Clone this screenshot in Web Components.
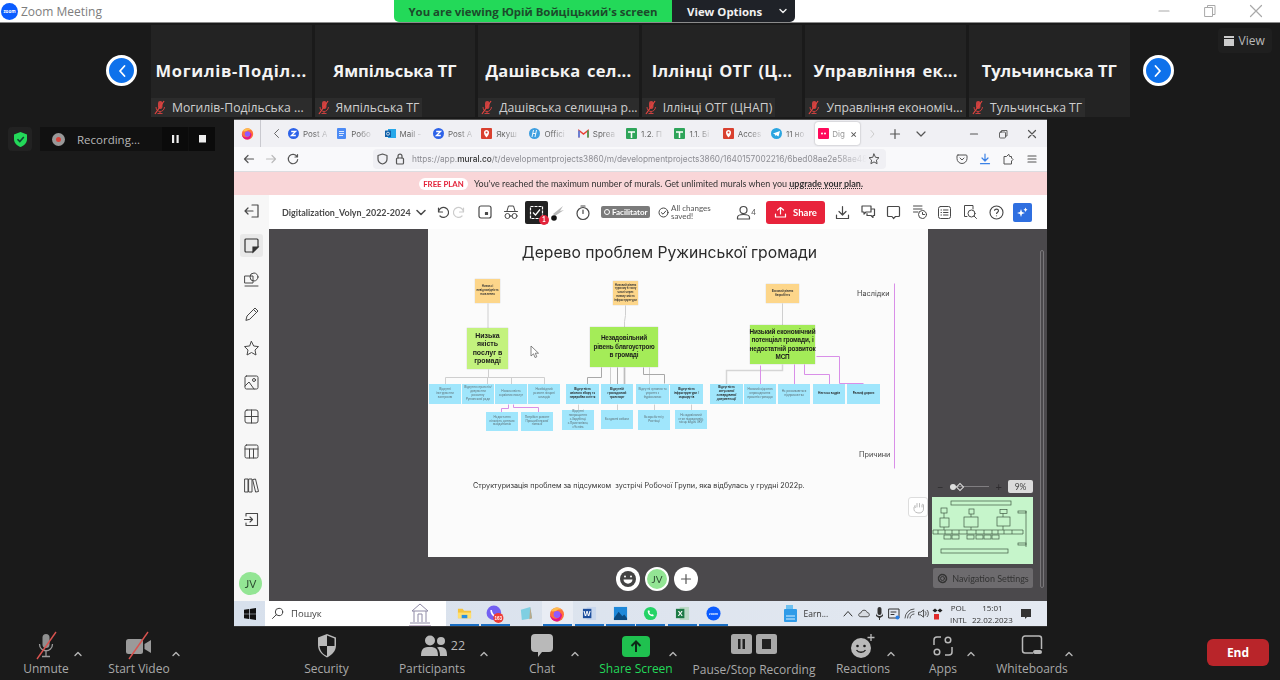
<!DOCTYPE html>
<html lang="uk">
<head>
<meta charset="utf-8">
<title>Zoom Meeting</title>
<style>
  html, body { margin: 0; height: 680px; overflow: hidden; background: #1a1a1a; }
  body { font-family: "Open Sans", "Noto Sans", sans-serif; display: flex; flex-direction: column; }
  #stage { display: grid; grid-template-columns: 234px 813px 1fr; height: 508px; }
</style>
</head>
<body>
<zoom-titlebar></zoom-titlebar>

<film-strip>
  <film-tile name="Могилів-Поділ..." label="Могилів-Подільська ..." full style="--ls:.7px"></film-tile>
  <film-tile name="Ямпільська ТГ" label="Ямпільська ТГ" style="--ls:0;--ws:0"></film-tile>
  <film-tile name="Дашівська сел..." label="Дашівська селищна р..." full></film-tile>
  <film-tile name="Іллінці ОТГ (Ц..." label="Іллінці ОТГ (ЦНАП)"></film-tile>
  <film-tile name="Управління ек..." label="Управління економіч..." full></film-tile>
  <film-tile name="Тульчинська ТГ" label="Тульчинська ТГ" style="--ls:0;--ws:0"></film-tile>
</film-strip>

<div id="stage">
  <recording-bar></recording-bar>
  <shared-screen>
    <browser-tabs></browser-tabs>
    <browser-url></browser-url>
    <plan-banner></plan-banner>
    <mural-app>
      <mural-canvas>
        <diagram-node x="47" y="50" w="25" h="24" kind="sticky">Низька і невідповідність населення</diagram-node>
        <diagram-node x="185" y="52" w="25" h="24" kind="sticky">Низький рівень туризму в тому числі через низьку якість інфраструктури</diagram-node>
        <diagram-node x="338" y="55" w="33" h="19" kind="sticky">Високий рівень безробіття</diagram-node>

        <diagram-node x="39" y="99" w="41" h="41" kind="green pale">Низька<br>якість<br>послуг в<br>громаді</diagram-node>
        <diagram-node x="162" y="98" w="68" h="40" kind="green">Незадовільний<br>рівень благоустрою<br>в громаді</diagram-node>
        <diagram-node x="322" y="96" w="65" h="39" kind="green">Низький економічний<br>потенціал громади, і<br>недостатній розвиток<br>МСП</diagram-node>

        <diagram-node x="1" y="155" w="32" h="20" kind="blue">Відсутні інструменти контролю</diagram-node>
        <diagram-node x="34" y="155" w="32" h="20" kind="blue">Відсутня стратегія/документи розвитку Ружинської ради</diagram-node>
        <diagram-node x="67" y="155" w="32" h="20" kind="blue">Низька якість сервісних послуг</diagram-node>
        <diagram-node x="100" y="155" w="32" h="20" kind="blue">Необхідний ремонт лікарні закладів</diagram-node>
        <diagram-node x="138" y="155" w="33" h="20" kind="blue bold">Відсутність якісного збору та переробки сміття</diagram-node>
        <diagram-node x="173" y="155" w="32" h="20" kind="blue bold">Відсутній громадський транспорт</diagram-node>
        <diagram-node x="208" y="155" w="33" h="20" kind="blue">Відсутні зупинки та укриття з бурівськими</diagram-node>
        <diagram-node x="242" y="155" w="33" h="20" kind="blue bold">Відсутність інфраструктури /маршрутів</diagram-node>
        <diagram-node x="282" y="155" w="33" h="20" kind="blue bold">Відсутність актуальної затвердженої документації</diagram-node>
        <diagram-node x="316" y="155" w="32" h="20" kind="blue">Низький відсоток впровадження проєктів громади</diagram-node>
        <diagram-node x="350" y="155" w="32" h="20" kind="blue">Не розвиваються підприємства</diagram-node>
        <diagram-node x="385" y="155" w="32" h="20" kind="blue bold">Нестача кадрів</diagram-node>
        <diagram-node x="419" y="155" w="33" h="20" kind="blue bold">Рельєф дороги</diagram-node>

        <diagram-node x="58" y="183" w="32" h="19" kind="blue">Недостатня кількість дитячих майданчиків</diagram-node>
        <diagram-node x="93" y="183" w="32" h="19" kind="blue">Потрібен ремонт Пришиб'янської гімназії</diagram-node>
        <diagram-node x="134" y="181" w="32" h="20" kind="blue">Відсутні покращення: с.Зарубінці, с.Пристанівка, с.Чепінь</diagram-node>
        <diagram-node x="173" y="181" w="32" h="19" kind="blue">Бездомні собаки</diagram-node>
        <diagram-node x="210" y="181" w="32" h="20" kind="blue">Безхребетні у Ростівці</diagram-node>
        <diagram-node x="247" y="181" w="32" h="19" kind="blue">Незадовільний стан підрядників, місць видач ЗКУ</diagram-node>
      </mural-canvas>
    </mural-app>
    <win-taskbar></win-taskbar>
  </shared-screen>
</div>

<zoom-toolbar></zoom-toolbar>

<script>
// small svg helper, everything below is drawn by hand
const svg = (w, h, body, sw = 1.2) =>
  `<svg width="${w}" height="${h}" viewBox="0 0 ${w} ${h}" fill="none" stroke="currentColor" stroke-width="${sw}" stroke-linecap="round" stroke-linejoin="round">${body}</svg>`;

const MUTE_SMALL = `<svg width="12" height="15" viewBox="0 0 12 15" fill="none" style="flex:none">
  <rect x="4" y="1" width="4.500" height="8" rx="2.200" fill="#c9403f"/>
  <path d="M2 7c0 6 8 6 8.500 0M6 11v2.500M3.500 13.500h5" stroke="#c9403f"/>
  <path d="M1 14 10 1" stroke="#e0443f" stroke-width="1.300"/></svg>`;

const FIREFOX = (s) => `<svg width="${s}" height="${s}" viewBox="0 0 16 16">
  <circle cx="8" cy="8.500" r="7" fill="#ff7139"/>
  <path d="M8 15.500a7 7 0 0 1-7-7c1 3 4 5 7 4s4-4 2-6c2 0 3 2 3 3-1 4-3 6-5 6z" fill="#e31587"/>
  <circle cx="8" cy="8.500" r="3.400" fill="#9059ff"/>
  <path d="M2 5c2-4 8-5 11-1-3-1-5 0-6 1-2 0-3 1-5 0z" fill="#ffbd4f"/></svg>`;

class ShadowBase extends HTMLElement {
  constructor() {
    super();
    this.attachShadow({ mode: "open" });
  }
  connectedCallback() {
    this.shadowRoot.innerHTML = `<style>${this.css()}</style>${this.html()}`;
  }
  css() { return ":host{display:block}"; }
  html() { return "<slot></slot>"; }
}

/* ---------- zoom chrome ---------- */
class ZoomTitlebar extends ShadowBase {
  css() {
    return `
      :host { display: grid; grid-template-columns: 394px 401px 1fr; height: 22px; background: #fff; border-bottom: 1px solid #8b8b8b; font-family: "Open Sans", sans-serif; }
      .app { display: flex; align-items: center; gap: 3px; padding-left: 1px; font-size: 12px; color: #7d7d7d; }
      .logo { width: 17px; height: 17px; border-radius: 50%; background: #0b5cff; display: flex; align-items: center; justify-content: center; }
      .logo span { color: #fff; font-size: 4.500px; font-weight: 700; }
      .banner { display: flex; height: 22px; font-weight: 700; }
      .green { width: 278px; background: #23d959; border-radius: 0 0 0 5px; display: flex; align-items: center; justify-content: center; font-size: 11.400px; color: #1c4a2b; }
      .opts { flex: 1; background: #1f2228; color: #f1f1f1; border-radius: 0 0 5px 0; display: flex; align-items: center; padding-left: 15px; gap: 17px; font-size: 11.400px; }
      .win { display: flex; justify-content: flex-end; align-items: center; color: #a9a9a9; gap: 32px; padding-right: 17px; }
    `;
  }
  html() {
    return `
      <div class="app"><div class="logo"><span>zoom</span></div>Zoom Meeting</div>
      <div class="banner">
        <div class="green">You are viewing Юрій Войціцький's screen</div>
        <div class="opts">View Options ${svg(8, 6, '<path d="M1 1.500 4 4.500 7 1.500"/>', 1.4)}</div>
      </div>
      <div class="win">
        ${svg(14, 14, '<path d="M2 7H12"/>')}
        ${svg(14, 14, '<rect x="2" y="3.500" width="7.500" height="9"/><path d="M4.500 3.500V1.500H12V10.500H9.500"/>', 1)}
        ${svg(14, 14, '<path d="M1.500 1.500 12.500 12.500M12.500 1.500 1.500 12.500"/>')}
      </div>`;
  }
}

class FilmStrip extends ShadowBase {
  css() {
    return `
      :host { display: flex; align-items: center; height: 96px; padding: 0 0 1px 106px; box-sizing: border-box; font-family: "Open Sans", sans-serif; }
      .tiles { display: flex; gap: 3px; margin: 0 13px 0 14px; }
      .arrow { width: 31px; height: 31px; flex: none; border-radius: 50%; background: #0e71eb; border: 3px solid #fff; box-sizing: border-box; color: #fff; display: flex; align-items: center; justify-content: center; }
      .view { align-self: flex-start; margin: 5px 0 0 44px; height: 25px; padding: 0 7px 0 6px; display: flex; align-items: center; gap: 5px; background: #1f1f1f; border-radius: 4px; color: #b9b9b9; font-size: 12px; }
      .bars { width: 10px; height: 10px; background: linear-gradient(#ccc 0 2px, #1f1f1f 2px 3px, #ccc 3px); }
    `;
  }
  html() {
    return `
      <div class="arrow">${svg(10, 14, '<path d="M7.500 2 3 7 7.500 12"/>', 1.8)}</div>
      <div class="tiles"><slot></slot></div>
      <div class="arrow">${svg(10, 14, '<path d="M2.500 2 7 7 2.500 12"/>', 1.8)}</div>
      <div class="view"><span class="bars"></span>View</div>`;
  }
}

class FilmTile extends ShadowBase {
  css() {
    return `
      :host { display: flex; flex-direction: column; width: 160.600px; height: 92px; background: #232323; }
      .name { flex: 1; padding-top: 19px; box-sizing: border-box; display: flex; align-items: center; justify-content: center; color: #f4f4f4; font-size: 16.500px; font-weight: 700; white-space: nowrap; word-spacing: var(--ws, 2px); letter-spacing: var(--ls, .25px); }
      .label { align-self: flex-start; height: 19px; display: flex; align-items: center; gap: 6px; padding: 0 3px 0 3px; background: #2c2c2c; color: #cfcfcf; font-size: 12.200px; white-space: nowrap; box-sizing: border-box; }
      :host([full]) .label { width: 100%; }
    `;
  }
  html() {
    return `
      <div class="name">${this.getAttribute("name")}</div>
      <div class="label">${MUTE_SMALL}<span>${this.getAttribute("label")}</span></div>`;
  }
}

class RecordingBar extends ShadowBase {
  css() {
    return `
      :host { display: flex; align-items: flex-start; gap: 8px; padding: 8px 0 0 8px; font-family: "Open Sans", sans-serif; }
      .shield { width: 24px; height: 24px; background: #222; border-radius: 4px; display: flex; align-items: center; justify-content: center; }
      .bar { display: flex; height: 24px; width: 175px; background: #111; align-items: center; color: #b7b7b7; font-size: 11.500px; }
      .dot { width: 13px; height: 13px; margin: 0 12px 0 12px; border-radius: 50%; background: #999; display: flex; align-items: center; justify-content: center; }
      .dot i { width: 5px; height: 5px; border-radius: 50%; background: #d8433b; }
      .txt { flex: 1; }
      .btn { width: 26px; height: 24px; display: flex; align-items: center; justify-content: center; background: #0b0b0b; margin-left: 1px; color: #eee; }
    `;
  }
  html() {
    return `
      <div class="shield"><svg width="15" height="17" viewBox="0 0 15 17"><path d="M7.500 1 14 3.500V8c0 4-3 6.800-6.500 8C4 14.800 1 12 1 8V3.500z" fill="#23d959"/><path d="M4.500 8.200 6.800 10.500 10.800 6" fill="none" stroke="#143" stroke-width="1.600"/></svg></div>
      <div class="bar">
        <span class="dot"><i></i></span><span class="txt">Recording...</span>
        <span class="btn">${svg(9, 10, '<rect x="1" y="1" width="2.200" height="8" fill="currentColor" stroke="none"/><rect x="5.500" y="1" width="2.200" height="8" fill="currentColor" stroke="none"/>')}</span>
        <span class="btn">${svg(9, 10, '<rect x="1" y="1" width="7" height="7.500" fill="currentColor" stroke="none"/>')}</span>
      </div>`;
  }
}

/* ---------- bottom toolbar ---------- */
const TOOLS = [
  { label: "Unmute", ml: 19, w: 54, caret: 1, icon: `<svg width="26" height="30" viewBox="0 0 26 30" fill="none"><rect x="9.500" y="3" width="7" height="14" rx="3.500" fill="#8f8f8f"/><path d="M6.500 13c0 9 13 9 13 0M13 20v5M9 25.500h8" stroke="#9a9a9a" stroke-width="1.300"/><path d="M4 28 23 1" stroke="#d9534f" stroke-width="1.400"/></svg>` },
  { label: "Start Video", ml: 24, w: 64, caret: 1, icon: `<svg width="28" height="30" viewBox="0 0 28 30" fill="none"><rect x="1" y="8" width="17" height="15" rx="2.500" fill="#9a9a9a"/><path d="M19.500 13 26 9v13l-6.500-4z" fill="#9a9a9a"/><path d="M4 28 23 1" stroke="#d9534f" stroke-width="1.400"/></svg>` },
  { label: "Security", ml: 114, w: 63, icon: `<svg width="20" height="26" viewBox="0 0 20 26"><path d="M10 1 19 4.500V12c0 6-4 10-9 12.500C5 22 1 18 1 12V4.500z" fill="#b9b9b9"/><path d="M10 2.500V13H2.500C2.500 8 2.500 6 2.500 5.500zM10 13h7.500c-.5 5-3.500 8.500-7.500 10z" fill="#1a1a1a" transform="matrix(-1 0 0 1 20 0)"/></svg>` },
  { label: "Participants", ml: 27, w: 94, caret: 1, count: "22", icon: `<svg width="26" height="24" viewBox="0 0 26 24" fill="#b9b9b9"><circle cx="9" cy="6.500" r="5"/><circle cx="20" cy="7" r="4"/><path d="M0 22c0-8 3-9 9-9s8 2 8 9zM18 13c5 0 8 1 8 8v1h-7c0-4-1-7-3-8.500z"/></svg>` },
  { label: "Chat", ml: 25, w: 56, caret: 1, icon: `<svg width="22" height="25" viewBox="0 0 22 25"><path d="M4 1h14a4 4 0 0 1 4 4v10a4 4 0 0 1-4 4h-7l-4 5v-5H4a4 4 0 0 1-4-4V5a4 4 0 0 1 4-4z" fill="#b9b9b9"/></svg>` },
  { label: "Share Screen", ml: 24, w: 64, caret: 1, green: 1, icon: `<svg width="28" height="21" viewBox="0 0 28 21" style="margin-top:2px"><rect width="28" height="21" rx="4" fill="#1fc14f"/><path d="M14 16V6M9.500 10 14 5.500 18.500 10" fill="none" stroke="#0c2b17" stroke-width="2"/></svg>` },
  { label: "Pause/Stop Recording", ml: 14, w: 124, low: 1, icon: `<svg width="46" height="22" viewBox="0 0 46 22" style="margin-top:-3px"><rect x="0" y="1" width="21" height="20" rx="2.500" fill="#a9a9a9"/><rect x="7" y="6" width="2.500" height="10" fill="#222"/><rect x="11.500" y="6" width="2.500" height="10" fill="#222"/><rect x="25" y="1" width="21" height="20" rx="2.500" fill="#a9a9a9"/><rect x="31" y="6" width="9" height="10" fill="#222"/></svg>` },
  { label: "Reactions", ml: 24, w: 46, caret: 1, icon: `<svg width="26" height="26" viewBox="0 0 26 26"><circle cx="11" cy="15" r="10" fill="#b9b9b9"/><circle cx="7.500" cy="13" r="1.300" fill="#1a1a1a"/><circle cx="14.500" cy="13" r="1.300" fill="#1a1a1a"/><path d="M6.500 17c2 3 7 3 9 0" fill="none" stroke="#1a1a1a" stroke-width="1.300"/><path d="M21 1v7M17.500 4.500h7" stroke="#b9b9b9" stroke-width="1.300"/></svg>` },
  { label: "Apps", ml: 24, w: 46, caret: 1, icon: `<svg width="22" height="24" viewBox="0 0 22 24" fill="none" stroke="#b9b9b9" stroke-width="1.500"><path d="M9 3H5a3 3 0 0 0-3 3v5M20 13v5a3 3 0 0 1-3 3h-4"/><circle cx="16" cy="6" r="2.800"/><circle cx="5" cy="18" r="2.800"/></svg>` },
  { label: "Whiteboards", ml: 24, w: 64, caret: 1, icon: `<svg width="22" height="24" viewBox="0 0 22 24" fill="none" stroke="#b9b9b9" stroke-width="1.500"><path d="M12 19H4a2.500 2.500 0 0 1-2.500-2.500v-12A2.500 2.500 0 0 1 4 2h14a2.500 2.500 0 0 1 2.500 2.500V15"/><rect x="12" y="16" width="9" height="4" rx="2" fill="#b9b9b9" stroke="none"/></svg>` },
];

class ZoomToolbar extends ShadowBase {
  css() {
    return `
      :host { display: flex; height: 53px; background: #1a1a1a; font-family: "Open Sans", sans-serif; color: #a9a9a9; }
      .tool { display: flex; flex: none; }
      .main { display: flex; flex-direction: column; align-items: center; box-sizing: border-box; padding-top: 3px; }
      .icon { height: 31px; display: flex; align-items: center; gap: 4px; color: #b9b9b9; font-size: 12.500px; }
      .icon.shift { padding-left: 22px; }
      .label { font-size: 12px; line-height: 16px; white-space: nowrap; }
      .low .label { margin-top: 1px; }
      .green .label { color: #23d959; }
      .caret { width: 10px; padding-top: 13px; color: #b5b5b5; }
      .end { margin: 12px 11px 0 auto; width: 62px; height: 27px; border-radius: 6px; background: #b9252a; color: #fff; font-weight: 700; font-size: 12px; display: flex; align-items: center; justify-content: center; }
    `;
  }
  html() {
    const caret = `<div class="caret">${svg(10, 6, '<path d="M2 4.500 5 1.500 8 4.500"/>', 1.4)}</div>`;
    return TOOLS.map((t) => `
      <div class="tool" style="margin-left:${t.ml}px">
        <div class="main ${t.green ? "green" : ""} ${t.low ? "low" : ""}" style="width:${t.w}px">
          <div class="icon ${t.count ? "shift" : ""}">${t.icon}${t.count ? `<span>${t.count}</span>` : ""}</div>
          <div class="label">${t.label}</div>
        </div>
        ${t.caret ? caret : ""}
      </div>`).join("") + `<div class="end">End</div>`;
  }
}

/* ---------- shared firefox window ---------- */
class SharedScreen extends ShadowBase {
  css() {
    return `:host { display: flex; flex-direction: column; height: 508px; background: #fff; filter: blur(.35px); font-family: "Lato", "Inter", sans-serif; overflow: hidden; }`;
  }
}

const TAB_ICONS = {
  zoom: `<svg width="11" height="11" viewBox="0 0 11 11"><circle cx="5.500" cy="5.500" r="5.500" fill="#2d62e8"/><path d="M3.200 3.500H7.600L3.400 7.500H7.800" fill="none" stroke="#fff" stroke-width="1.300"/></svg>`,
  docs: `<svg width="11" height="11" viewBox="0 0 11 11"><rect x="1" width="9" height="11" rx="1" fill="#4d8bf5"/><path d="M3 3.500H8M3 5.500H8M3 7.500H7" stroke="#fff" stroke-width=".8"/></svg>`,
  mail: `<svg width="11" height="11" viewBox="0 0 11 11"><rect x="3" y="1" width="8" height="9" fill="#28a8ea"/><rect y="2.500" width="6" height="6.500" rx=".6" fill="#0f5fa8"/><circle cx="3" cy="5.700" r="1.500" fill="none" stroke="#fff" stroke-width=".7"/></svg>`,
  pin: `<svg width="11" height="11" viewBox="0 0 11 11"><rect width="11" height="11" rx="1" fill="#d9402f"/><path d="M5.500 9.500C3.500 7 3 6 3 4.500a2.500 2.500 0 0 1 5 0C8 6 7.500 7 5.500 9.500z" fill="#fff"/><circle cx="5.500" cy="4.500" r="1" fill="#d9402f"/></svg>`,
  hp: `<svg width="11" height="11" viewBox="0 0 11 11"><circle cx="5.500" cy="5.500" r="5.500" fill="#3f9fe0"/><path d="M4.500 2 3 9M7.500 2 6 9M3.800 5.500H6.800" stroke="#fff" stroke-width=".9"/></svg>`,
  gmail: `<svg width="11" height="11" viewBox="0 0 11 11" fill="none"><path d="M1 9.500V2.500L5.500 6 10 2.500V9.500" stroke="#ea4335" stroke-width="1.500"/><path d="M1 2.500V9.500" stroke="#4285f4" stroke-width="1.500"/><path d="M10 2.500V9.500" stroke="#34a853" stroke-width="1.500"/></svg>`,
  sheet: `<svg width="11" height="11" viewBox="0 0 11 11"><rect width="11" height="11" rx="1" fill="#2fa55a"/><path d="M2 4H9M5.500 4V10" stroke="#fff" stroke-width="1.500"/></svg>`,
  tg: `<svg width="11" height="11" viewBox="0 0 11 11"><circle cx="5.500" cy="5.500" r="5.500" fill="#2ba5e0"/><path d="M2 5.500 9 3 7.500 8.500 5 7 4.300 8.300 4 6.500z" fill="#fff"/></svg>`,
  mural: `<svg width="11" height="11" viewBox="0 0 11 11"><rect width="11" height="11" rx="1" fill="#ff0a5b"/><circle cx="4" cy="5.500" r="1" fill="#fff"/><circle cx="7" cy="5.500" r="1" fill="#fff"/></svg>`,
};
const TABS = [["zoom", "Post A"], ["docs", "Робо"], ["mail", "Mail -"], ["zoom", "Post A"], ["pin", "Якуш"], ["hp", "Offici"], ["gmail", "Sprea"], ["sheet", "1.2. П"], ["sheet", "1.1. Бі"], ["pin", "Acces"], ["tg", "11 но"]];

class BrowserTabs extends ShadowBase {
  css() {
    return `
      :host { display: flex; align-items: center; flex: none; height: 28px; background: #f0f0f4; border-top: 1px solid #555; box-sizing: border-box; font-family: "Inter", sans-serif; font-size: 8px; color: #666; }
      .ff { width: 26px; display: flex; justify-content: center; }
      .sep { width: 1px; height: 27px; background: #c9c9cf; margin-right: 5px; }
      .back { width: 21px; color: #666; display: flex; justify-content: center; }
      .tab { width: 48.300px; flex: none; display: flex; align-items: center; gap: 4px; padding-left: 1px; box-sizing: border-box; white-space: nowrap; }
      .tab span { -webkit-mask-image: linear-gradient(90deg, #000 45%, rgba(0,0,0,.25) 95%); mask-image: linear-gradient(90deg, #000 45%, rgba(0,0,0,.25) 95%); }
      .active { width: 45px; height: 23px; margin: 0 0 0 -3px; flex: none; background: #fff; border-radius: 3px; box-shadow: 0 0 2px rgba(0,0,0,.35); display: flex; align-items: center; padding-left: 3px; box-sizing: border-box; gap: 3px; color: #999; }
      .active b { font-weight: 400; font-size: 11px; color: #555; margin-left: 2px; }
      .rest { flex: 1; display: flex; align-items: center; color: #555; }
      .w { display: flex; justify-content: center; flex: none; }
    `;
  }
  html() {
    const cells = [[10, svg(5, 10, '<path d="M1 1.500 4 5 1 8.500"/>', 1), "#ccc"], [14, svg(12, 12, '<path d="M6 1.500V10.500M1.500 6H10.500"/>')], [14, svg(12, 12, '<path d="M2 4 6 8 10 4"/>')], [42, svg(10, 10, '<path d="M1.500 5H8.500"/>')], [19, svg(10, 10, '<rect x="1.500" y="3" width="6" height="6" rx="1"/><path d="M3.500 3V1.500H9V7H7.500"/>', .9)], [19, svg(10, 10, '<path d="M1.500 1.500 8.500 8.500M8.500 1.500 1.500 8.500"/>')]];
    return `
      <div class="ff">${FIREFOX(13)}</div>
      <div class="sep"></div>
      <div class="back">${svg(7, 11, '<path d="M5.500 1.500 1.500 5.500 5.500 9.500"/>', 1)}</div>
      ${TABS.map(([icon, text]) => `<div class="tab">${TAB_ICONS[icon]}<span>${text}</span></div>`).join("")}
      <div class="active">${TAB_ICONS.mural}<span>Dig</span><b>×</b></div>
      <div class="rest">${cells.map(([ml, ic, col]) => `<span class="w" style="margin-left:${ml}px;${col ? `color:${col}` : ""}">${ic}</span>`).join("")}</div>`;
  }
}

class BrowserUrl extends ShadowBase {
  css() {
    return `
      :host { display: flex; align-items: center; flex: none; height: 25px; background: #f9f9fb; color: #555; padding-left: 9px; box-sizing: border-box; border-bottom: 1px solid #dcdce0; font-family: "Inter", sans-serif; }
      .nav { display: flex; align-items: center; gap: 10px; width: 130px; }
      .box { display: flex; align-items: center; width: 513px; height: 20px; background: #f0f0f4; border-radius: 4px; padding-left: 4px; box-sizing: border-box; }
      .url { width: 455px; margin-left: 7px; white-space: nowrap; font-size: 8.300px; color: #8d8d93; -webkit-mask-image: linear-gradient(90deg, #000 93%, transparent); mask-image: linear-gradient(90deg, #000 93%, transparent); }
      .url b { color: #333; font-weight: 500; }
      .shield { margin-right: 7px; display: flex; }
      .star { margin-left: 1px; display: flex; }
      .right { display: flex; gap: 11px; margin-left: 70px; align-items: center; }
    `;
  }
  html() {
    return `
      <div class="nav">
        ${svg(12, 12, '<path d="M10.500 6H1.500M5 2.500 1.500 6 5 9.500"/>')}
        <span style="color:#bbb;display:flex">${svg(12, 12, '<path d="M1.500 6H10.500M7 2.500 10.500 6 7 9.500"/>')}</span>
        ${svg(12, 12, '<path d="M10 3.500A4.700 4.700 0 1 0 10.700 6.500M10.500 1.500V4H8"/>')}
      </div>
      <div class="box">
        <span class="shield">${svg(11, 12, '<path d="M5.500 1 10 2.500V6c0 2.500-2 4.300-4.500 5C3 10.300 1 8.500 1 6V2.500z"/>')}</span>
        ${svg(10, 12, '<rect x="1.500" y="5" width="7" height="6" rx="1"/><path d="M3 5V3.200a2 2 0 0 1 4 0V5"/>')}
        <span class="url">https://app.<b>mural.co</b>/t/developmentprojects3860/m/developmentprojects3860/1640157002216/6bed08ae2e58ae481</span>
        <span class="star">${svg(12, 12, '<path d="M6 1 7.500 4.300 11 4.700 8.400 7.100 9.100 10.700 6 8.900 2.900 10.700 3.600 7.100 1 4.700 4.500 4.300z"/>', 1)}</span>
      </div>
      <div class="right">
        ${svg(12, 12, '<path d="M2 2H10A1 1 0 0 1 11 3V5.500A5 5 0 0 1 1 5.500V3A1 1 0 0 1 2 2ZM4 5 6 7 8 5"/>', 1)}
        <span style="color:#3b82e6;display:flex">${svg(12, 12, '<path d="M6 1V8M3 5 6 8 9 5M1.500 10.700H10.500"/>')}</span>
        ${svg(12, 12, '<path d="M6.500 1.500 4.500 3.500H2V11H9.500V8L11 6.500 9.500 5V3.500H8z"/>', 1)}
        <span style="margin-left:1px;display:flex">${svg(12, 12, '<path d="M2 3H10M2 6H10M2 9H10"/>')}</span>
      </div>`;
  }
}

class PlanBanner extends ShadowBase {
  css() {
    return `
      :host { display: flex; align-items: center; flex: none; height: 23px; background: #f9d6d8; padding-left: 185px; gap: 6px; font-size: 8.970px; color: #333; white-space: nowrap; box-sizing: border-box; }
      .pill { width: 49px; height: 12px; border-radius: 6px; background: #fff; color: #e3233a; font-weight: 700; font-size: 7.800px; display: flex; align-items: center; justify-content: center; }
      b { font-weight: 700; text-decoration: underline dotted; }
    `;
  }
  html() {
    return `<span class="pill">FREE PLAN</span><span>You've reached the maximum number of murals. Get unlimited murals when you <b>upgrade your plan.</b></span>`;
  }
}

/* ---------- mural app ---------- */
const RAIL = [
  svg(17, 16, '<path d="M9 2H15V14H9M10 8H2M5 5 2 8 5 11"/>'),
  `<svg width="17" height="17" viewBox="0 0 17 17" fill="none" stroke="#333" stroke-width="1.200"><path d="M3 2H14A1 1 0 0 1 15 3V10L10 15H3A1 1 0 0 1 2 14V3A1 1 0 0 1 3 2Z"/><path d="M15 10 10 15V10Z" fill="#333"/></svg>`,
  svg(17, 17, '<circle cx="11" cy="6" r="4"/><rect x="2" y="5" width="8" height="7"/><path d="M2 15H15"/>', 1),
  svg(17, 17, '<path d="M3 14 4 10 12 2 15 5 7 13ZM10.500 3.500 13.500 6.500"/>', 1),
  svg(17, 17, '<path d="M8.500 1.500 10.700 6 15.500 6.600 12 10 13 15 8.500 12.500 4 15 5 10 1.500 6.600 6.300 6Z"/>', 1),
  svg(17, 17, '<rect x="2" y="2" width="13" height="13" rx="1.500"/><circle cx="11" cy="6" r="1.500"/><path d="M2 12 6 8 11 15"/>', 1),
  svg(17, 17, '<rect x="2" y="2" width="13" height="13" rx="2"/><path d="M8.500 2V15M2 8.500H15"/>', 1),
  svg(17, 17, '<rect x="2" y="2" width="13" height="13" rx="1.500"/><path d="M2 6H15M6.500 6V15M10.500 6V15"/>', 1),
  svg(17, 17, '<rect x="2" y="2" width="3" height="13"/><rect x="6" y="2" width="3" height="13"/><path d="M10 2.500 12.500 2 15.500 14.500 13 15Z"/>', 1),
  svg(17, 17, '<path d="M3 5V2.500H14.500V14.500H3V12M1.500 8.500H9.500M7 6 9.500 8.500 7 11"/>', 1.100),
];

// [center x on the screen, width, content] - the row is built with margins from these
const TOPBAR = [
  [421, 12, svg(10, 7, '<path d="M1 1.500 5 5.500 9 1.500"/>', 1.5)],
  [442, 14, svg(14, 14, '<path d="M3.500 3V7H7.500M3.500 7A5 5 0 1 1 5 11"/>')],
  [460, 14, `<span style="color:#ccc;display:flex">${svg(14, 14, '<path d="M10.500 3V7H6.500M10.500 7A5 5 0 1 0 9 11"/>')}</span>`],
  [485, 16, svg(14, 14, '<rect x="1" y="1" width="12" height="12" rx="2"/><rect x="7.500" y="7.500" width="2" height="2" fill="currentColor"/>')],
  [511, 16, svg(16, 16, '<path d="M4 7 5.500 2H10.500L12 7M1.500 7.500H14.500"/><circle cx="4.500" cy="12" r="2.500"/><circle cx="11.500" cy="12" r="2.500"/><path d="M7 12H9"/>', 1)],
  [536.500, 23, `<div class="sel"><svg width="15" height="15" viewBox="0 0 15 15" fill="none" stroke="#fff" stroke-width="1.200"><path d="M1.500 1.500H13.500V13.500H1.500Z" stroke-dasharray="3 1"/><path d="M4 7.500 6.500 10 11 4.500"/></svg><span class="num">1</span></div>`],
  [558, 16, `<svg width="16" height="17" viewBox="0 0 16 17"><path d="M3 10 13 2 10 7 14 6 5 12Z" fill="#b9b9b9"/><circle cx="4" cy="14" r="2.800" fill="#111"/></svg>`],
  [583, 16, svg(16, 17, '<circle cx="8" cy="9.500" r="6"/><path d="M6 2H10M8 6V9.500"/>')],
  [625.500, 49, `<div class="fac"><i></i>Facilitator</div>`],
  [663, 11, svg(11, 11, '<circle cx="5.500" cy="5.500" r="4.500"/><path d="M3.300 5.600 5 7.200 7.800 4"/>', 1)],
  [691, 40, `<div class="saved">All changes<br>saved!</div>`],
  [743, 15, svg(15, 15, '<circle cx="7.500" cy="5" r="3.500"/><path d="M1.500 14V12.500C1.500 10 4 9.500 7.500 9.500S13.500 10 13.500 12.500V14Z"/>')],
  [753.500, 6, `<span class="cnt">4</span>`],
  [795.500, 59, `<div class="share">${svg(13, 13, '<path d="M6.500 8V1.500M3.500 4 6.500 1.500 9.500 4M1.500 8V11H11.500V8" />')}<span>Share</span></div>`],
  [842, 15, svg(15, 15, '<path d="M7.500 1.500V9.500M4 6.500 7.500 10 11 6.500M1.500 10V13.500H13.500V10"/>')],
  [868, 16, svg(16, 16, '<path d="M2 2H11V8H6L4 10V8H2ZM12 5H14.500V11.500H13V13.500L11 11.500H7V9.500"/>')],
  [893, 15, svg(15, 15, '<path d="M2.500 1.500H12.500A1 1 0 0 1 13.500 2.500V10.500A1 1 0 0 1 12.500 11.500H9.500L7.500 13.500 6 11.500H2.500A1 1 0 0 1 1.500 10.500V2.500A1 1 0 0 1 2.500 1.500Z"/>')],
  [920, 16, svg(16, 16, '<path d="M1.500 2H10M1.500 5H10M1.500 8H6"/><circle cx="10.500" cy="10.500" r="4"/><path d="M10.500 8.500V10.500H12.500"/>', 1)],
  [944, 15, svg(15, 15, '<rect x="1.500" y="1.500" width="12" height="12" rx="2"/><path d="M6.500 5H11M6.500 7.500H11M6.500 10H11M4 5H4.500M4 7.500H4.500M4 10H4.500"/>', 1)],
  [970, 16, svg(16, 16, '<path d="M6 1.500H2.500V12.500H5M6 1.500H11V5"/><circle cx="9.500" cy="9.500" r="3.500"/><path d="M12 12 14.500 14.500"/>', 1)],
  [996, 15, `<svg width="15" height="15" viewBox="0 0 15 15" fill="none" stroke="#444" stroke-width="1.100"><circle cx="7.500" cy="7.500" r="6.500"/><path d="M5.500 5.800C5.500 3.500 9.500 3.500 9.500 5.800 9.500 7.300 7.500 7.200 7.500 9M7.500 10.500V11.200"/></svg>`],
  [1022.500, 19, `<div class="ai"><svg width="11" height="11" viewBox="0 0 11 11" fill="#fff"><path d="M4 2 5 5 8 6 5 7 4 10 3 7 0 6 3 5ZM8.500 .5 9.200 2 10.500 2.700 9.200 3.400 8.500 5 7.800 3.400 6.500 2.700 7.800 2Z"/></svg></div>`],
];

class MuralApp extends ShadowBase {
  css() {
    return `
      :host { display: grid; grid-template-columns: 35px 1fr; grid-template-rows: 34px 1fr; height: 406px; flex: none; background: #fff; color: #484848; }
      .rail { grid-row: 1 / 3; background: #f7f7f7; display: flex; flex-direction: column; }
      .rail .it { height: 34.300px; display: flex; align-items: center; justify-content: center; flex: none; }
      .rail .it:first-child { margin-top: -1px; }
      .rail .it > span { display: flex; align-items: center; justify-content: center; }
      .rail .it.on > span { background: #e9e9e9; border-radius: 3px; width: 23px; height: 23px; }
      .avatar { margin: auto 0 6px 5px; width: 23px; height: 23px; border-radius: 50%; background: #93e594; color: #2c4a30; font-size: 10.500px; display: flex; align-items: center; justify-content: center; }
      .top { display: flex; align-items: center; white-space: nowrap; }
      .title { margin-left: 13px; width: 129px; font-size: 8.950px; font-weight: 700; color: #4a4a4a; }
      .c { display: flex; justify-content: center; align-items: center; flex: none; }
      .sel { position: relative; width: 23px; height: 23px; background: #222; border-radius: 2px; display: flex; align-items: center; justify-content: center; }
      .num { position: absolute; right: -1px; bottom: -1px; width: 10px; height: 10px; border-radius: 50%; background: #e3233a; color: #fff; font-size: 6.500px; font-weight: 700; display: flex; align-items: center; justify-content: center; }
      .fac { width: 49px; height: 12px; background: #7b7b7b; border-radius: 2px; color: #fff; font-size: 8px; font-weight: 700; display: flex; align-items: center; gap: 2px; padding-left: 3px; box-sizing: border-box; }
      .fac i { width: 4px; height: 4px; border: 1px solid #fff; border-radius: 50%; }
      .saved { width: 40px; font-size: 8px; line-height: 8.500px; color: #555; }
      .cnt { font-size: 8px; color: #555; }
      .share { width: 59px; height: 23px; border-radius: 3px; background: #e8233b; color: #fff; font-size: 9.500px; font-weight: 700; display: flex; align-items: center; justify-content: center; gap: 6px; }
      .ai { width: 19px; height: 19px; background: #2f6fe0; border-radius: 2px; display: flex; align-items: center; justify-content: center; }
      .board { position: relative; background: #4b494c; overflow: hidden; }
      .float { position: absolute; left: 347px; top: 338px; display: flex; gap: 5px; }
      .float > div { width: 24px; height: 24px; border-radius: 50%; display: flex; align-items: center; justify-content: center; box-sizing: border-box; }
      .emoji { background: #fff; }
      .jv { background: #93e594; border: 2px solid #fff; font-size: 10px; color: #2c4a30; }
      .plus { background: #fff; color: #555; }
      .side { position: absolute; left: 663px; top: 251px; width: 102px; display: flex; flex-direction: column; gap: 4px; }
      .zoom { display: flex; align-items: center; height: 13px; color: #2e2c2f; font-size: 11px; }
      .track { width: 39px; height: 1px; background: #807e81; margin: 0 6px 0 7px; position: relative; }
      .track i { position: absolute; top: -2.500px; width: 6px; height: 6px; border-radius: 50%; background: #ddd; }
      .track i + i { width: 4px; height: 4px; top: -2.500px; background: none; border: 1px solid #ddd; transform: rotate(45deg); border-radius: 0; }
      .pct { margin-left: auto; margin-right: 1px; width: 25px; height: 13px; background: #dcdcdc; border-radius: 2px; color: #444; font-size: 8.500px; display: flex; align-items: center; justify-content: center; }
      .mini { display: block; width: 101px; height: 67px; }
      .nav { width: 100px; height: 20px; margin-left: 1px; border-radius: 2px; background: #6d6b6e; color: #333; font-size: 9px; display: flex; align-items: center; justify-content: center; gap: 4px; }
      .hand { position: absolute; left: 639px; top: 268px; width: 20px; height: 20px; background: #fff; border: 1px solid #ddd; border-radius: 3px; box-sizing: border-box; color: #bbb; display: flex; align-items: center; justify-content: center; }
      .scroll { position: absolute; left: 771px; top: 21px; bottom: 13px; width: 4px; border: 1px solid #79777a; border-radius: 3px; box-sizing: border-box; }
    `;
  }
  html() {
    let x = 411;
    const top = TOPBAR.map(([center, w, content]) => {
      const left = center - w / 2;
      const cell = `<div class="c" style="margin-left:${left - x}px;width:${w}px">${content}</div>`;
      x = left + w;
      return cell;
    }).join("");
    return `
      <div class="rail">
        ${RAIL.map((ic, i) => `<div class="it ${i === 1 ? "on" : ""}"><span>${ic}</span></div>`).join("")}
        <div class="avatar">JV</div>
      </div>
      <div class="top"><div class="title">Digitalization_Volyn_2022-2024</div>${top}</div>
      <div class="board">
        <slot></slot>
        <div class="hand">${svg(13, 13, '<path d="M3 6V4.500M5 6V2.500M7.500 6V2.500M10 6V4C10 3 11.500 3 11.500 4V8C11.500 10.500 9.500 12 7 12S2 10.500 2 8.500V6.500C2 5.500 3 5.500 3.500 6.500"/>', 1)}</div>
        <div class="side">
          <div class="zoom">
            <span style="margin-left:5px">−</span><span class="track"><i style="left:0"></i><i style="left:7px"></i></span><span>+</span>
            <span class="pct">9%</span>
          </div>
          <svg class="mini" viewBox="0 0 101 67" fill="none" stroke="#3f5a44" stroke-width=".7">
            <rect width="101" height="67" fill="#c6f5cb" stroke="none"/>
            <rect x="19" y="4" width="60" height="4"/><rect x="9" y="52" width="67" height="4"/>
            <rect x="9" y="11" width="6" height="5"/><rect x="37" y="12" width="5" height="5"/><rect x="68" y="12.500" width="7" height="4"/>
            <rect x="8" y="21" width="9" height="9"/><rect x="32" y="20" width="14" height="10"/><rect x="65" y="20" width="13" height="9"/>
            <path d="M12 16V21M39 17V20M71 16.500V20M12 30V33M39 30V33M71 29V33"/>
            <path d="M1 33H91M1 37H91M1 33V37M6 33V37M13 33V37M20 33V37M27 33V37M35 33V37M44 33V37M52 33V37M60 33V37M66 33V37M72 33V37M80 33V37M91 33V37"/>
            <rect x="12" y="38" width="7" height="4"/><rect x="20" y="38" width="7" height="4"/><rect x="35" y="38" width="7" height="4"/><rect x="44" y="38" width="7" height="4"/><rect x="52" y="38" width="7" height="4"/><rect x="60" y="38" width="7" height="4"/>
            <path d="M94 14V50"/><rect x="86" y="14" width="8" height="2"/><rect x="86" y="46" width="8" height="2"/>
          </svg>
          <div class="nav">${svg(11, 11, '<circle cx="5.500" cy="5.500" r="2"/><circle cx="5.500" cy="5.500" r="4" stroke-dasharray="2 1.100" stroke-width="1.500"/>', 1)}Navigation Settings</div>
        </div>
        <div class="scroll"></div>
        <div class="float">
          <div class="emoji">${svg(18, 18, '<circle cx="9" cy="9" r="8" fill="#444" stroke="none"/><path d="M4.500 9.500H13.500C13.500 15 4.500 15 4.500 9.500Z" fill="#fff" stroke="none"/><circle cx="6" cy="6.500" r="1" fill="#fff" stroke="none"/><circle cx="12" cy="6.500" r="1" fill="#fff" stroke="none"/>')}</div>
          <div class="jv">JV</div>
          <div class="plus">${svg(12, 12, '<path d="M6 1.500V10.500M1.500 6H10.500"/>')}</div>
        </div>
      </div>`;
  }
}

class MuralCanvas extends ShadowBase {
  css() {
    return `
      :host { display: block; position: absolute; left: 159px; top: 0; width: 500px; height: 328px; background: #fbfbfb; color: #333; font-family: "Lato", "Inter", sans-serif; filter: blur(.15px); }
      svg.lines { position: absolute; inset: 0; }
      .title { position: absolute; left: 0; width: 483px; top: 13px; text-align: center; font-family: "Inter", sans-serif; font-size: 15.700px; line-height: 22px; color: #2b2b2b; white-space: nowrap; }
      .cap { position: absolute; left: 45px; top: 252px; font-family: "Inter", sans-serif; font-size: 7.250px; line-height: 10px; color: #333; white-space: pre; }
      .side { position: absolute; font-family: "Inter", sans-serif; font-size: 7.300px; line-height: 12px; color: #444; }
      .cursor { position: absolute; left: 102px; top: 116px; }
    `;
  }
  html() {
    return `
      <svg class="lines" width="500" height="328" fill="none"><g transform="translate(.5 .5)">
        <g stroke="#cfcfcf" stroke-width="1">
          <path d="M59.500 74V99M60 140V148M17 155V148H116V155M59 148V155M83 148V155"/>
          <path d="M197 76V86L196 92V98"/>
          <path d="M182 138V155M221 138V155M232 155H250"/>
          <path d="M150 175V181M189 175V181M226 175V181M263 175V181"/>
          <path d="M354 74V96"/>
        </g>
        <g stroke="#a8a8a8" stroke-width="1"><path d="M173 138V148H159V155M189 138V155M215 138V145H236V154"/></g>
        <path d="M196 138V155" stroke="#bdbdbd" stroke-width="1.700"/>
        <path d="M354 135V141H298V155" stroke="#d5d5d5" stroke-width="1.500"/>
        <g stroke="#d98fe8" stroke-width="1">
          <path d="M73 183V179H80V175M85 175V178H110V183"/>
          <path d="M332 155V136M366 155V135M376 135V145H401V155M388 127H411V154H435"/>
          <path d="M466 54V239"/>
        </g>
      </g></svg>
      <slot></slot>
      <div class="title">Дерево проблем Ружинської громади</div>
      <div class="side" style="left:429px;top:59px">Наслідки</div>
      <div class="side" style="left:431px;top:220px">Причини</div>
      <div class="cap">Структуризація проблем за підсумком  зустрічі Робочої Групи, яка відбулась у грудні 2022р.</div>
      <svg class="cursor" width="10" height="14" viewBox="0 0 10 14"><path d="M1 1V11L3.500 8.800 5 12.500 6.800 11.800 5.300 8.200H8.500Z" fill="#fff" stroke="#666" stroke-width=".8"/></svg>`;
  }
}

class DiagramNode extends ShadowBase {
  css() {
    const a = (n) => this.getAttribute(n);
    return `
      :host { position: absolute; left: ${a("x")}px; top: ${a("y")}px; width: ${a("w")}px; height: ${a("h")}px; display: flex; align-items: center; justify-content: center; text-align: center; box-sizing: border-box; padding: 1px 2px; }
      :host(.sticky) { background: #fdd68a; color: #333; font-size: 3px; line-height: 3.800px; font-weight: 700; box-shadow: 0 0 1px rgba(0,0,0,.25); }
      :host(.green) { background: #a4ec58; color: #1c1c1c; font-family: "Liberation Sans", sans-serif; font-size: 6.400px; line-height: 8.400px; letter-spacing: -.15px; font-weight: 700; padding: 0; white-space: nowrap; box-shadow: 0 0 1px rgba(0,0,0,.3); }
      :host(.pale) { background: #c3f27e; font-size: 7px; letter-spacing: 0; }
      :host(.blue) { background: #a0e6fc; color: #5d7077; font-size: 3.100px; line-height: 3.900px; }
      :host(.bold) { color: #222; font-weight: 700; }
    `;
  }
  connectedCallback() {
    this.className = this.getAttribute("kind");
    super.connectedCallback();
  }
}

/* ---------- windows taskbar ---------- */
const TB = (s, body) => `<svg width="${s}" height="${s}" viewBox="0 0 16 16">${body}</svg>`;
const TASK = [
  [464, TB(15, '<path d="M1 3H6L7.500 5H15V13H1Z" fill="#f5c33b"/><rect x="1" y="7" width="14" height="6" fill="#ffdf6e"/><rect x="5" y="9.500" width="6" height="3.500" fill="#2a8fe0"/>'), 1],
  [495, TB(18, '<circle cx="7" cy="7" r="6.500" fill="#7360f2"/><path d="M4.500 4.500C5 9 7 10 9.500 10" fill="none" stroke="#fff" stroke-width="1.500"/><circle cx="11" cy="11.500" r="4.500" fill="#ef3b34"/><text x="11" y="13" font-size="4" font-weight="700" fill="#fff" text-anchor="middle" font-family="Liberation Sans">163</text>'), 1],
  [526, TB(15, '<path d="M2 4 12 1 14 13 3 15Z" fill="#7fcfe2"/><path d="M12 1 14 13 11 14Z" fill="#b9a98a"/>'), 0],
  [557, FIREFOX(16), 1],
  [589, TB(15, '<rect x="5" y="1" width="10" height="14" fill="#c9d8ee"/><rect x="1" y="3" width="9" height="10" fill="#1d4f9e"/><text x="5.500" y="11" font-size="8" font-weight="700" fill="#fff" text-anchor="middle" font-family="Liberation Sans">W</text>'), 1],
  [620, TB(15, '<rect x="1" y="1" width="14" height="14" fill="#1e88d9"/><path d="M1 13 6 6 10 11 12 9 15 13V15H1Z" fill="#0a4a80"/>'), 1],
  [650, TB(15, '<circle cx="8" cy="8" r="7" fill="#25d366"/><path d="M5 5C5 9 8 11 11 11L11.500 9.500 9.500 8.500 9 9.300C8 9 7 8 6.700 7L7.500 6.500 6.500 4.500Z" fill="#fff"/>'), 1],
  [682, TB(15, '<rect x="5" y="1" width="10" height="14" fill="#bcd9c6"/><rect x="1" y="3" width="9" height="10" fill="#1d7a45"/><text x="5.500" y="11" font-size="8" font-weight="700" fill="#fff" text-anchor="middle" font-family="Liberation Sans">X</text>'), 1],
  [713, TB(15, '<circle cx="8" cy="8" r="7.500" fill="#0b5cff"/><text x="8" y="9.300" font-size="3.600" font-weight="700" fill="#fff" text-anchor="middle" font-family="Liberation Sans">zoom</text>'), 1],
];
const TRAY = [
  [846, svg(10, 7, '<path d="M1 6 5 1.500 9 6"/>', 1)],
  [862, `<svg width="13" height="9" viewBox="0 0 13 9"><path d="M3 8C0 8 0 4 3 4 4 0 9 0 10 3.500 13 3.500 13 8 10 8Z" fill="#d8dce2" stroke="#444"/></svg>`],
  [877, `<svg width="9" height="13" viewBox="0 0 9 13" fill="#333"><rect x="2.500" width="4" height="8" rx="2"/><path d="M1 6C1 10 8 10 8 6V9L5 11V13H4V11L1 9Z"/></svg>`],
  [892, svg(12, 12, '<rect x="1" y="1" width="10" height="9"/><path d="M3 4H8M3 6.500H6"/><circle cx="9.500" cy="9.500" r="2" fill="#2a7de1" stroke="none"/>', 1)],
  [907, svg(11, 11, '<path d="M1 10A9 9 0 0 1 10 1M3.500 10A6.500 6.500 0 0 1 10 3.500M6 10A4 4 0 0 1 10 6" />', .8)],
  [922, svg(13, 11, '<path d="M1 4H3L6 1.500V9.500L3 7H1ZM8 3.500C9 4.500 9 6.500 8 7.500M10 2C11.700 4 11.700 7 10 9"/>', .9)],
  [935, `<svg width="11" height="12" viewBox="0 0 11 12"><path d="M3 .5 5.500 2.500 3 4.500.5 2.500ZM8 .5 10.500 2.500 8 4.500 5.500 2.500Z" fill="#222"/><rect x="2" y="6" width="5" height="5.500" fill="#e02a2a"/></svg>`],
];

class WinTaskbar extends ShadowBase {
  css() {
    return `
      :host { display: flex; align-items: center; flex: none; height: 26px; background: linear-gradient(90deg, #d7e0ec, #e4e9f1); border-bottom: 1px solid #333; box-sizing: border-box; font-family: "Open Sans", sans-serif; color: #333; font-size: 8.500px; white-space: nowrap; }
      .start { width: 31px; display: flex; justify-content: center; }
      .search { width: 181px; height: 25px; background: #fff; display: flex; align-items: center; gap: 7px; padding-left: 6px; box-sizing: border-box; color: #444; font-size: 9.500px; }
      .search .church { margin-left: auto; margin-right: 15px; }
      .c { flex: none; display: flex; align-items: center; justify-content: center; height: 25px; position: relative; }
      .on { background: #e9edf4; }
      .run::after { content: ""; position: absolute; left: 1px; right: 1px; bottom: 0; height: 2px; background: #1a6fc4; }
      .stack { line-height: 12px; text-align: center; font-size: 8px; flex: none; }
    `;
  }
  html() {
    let x = 446;
    const cell = (center, w, html, cls = "") => {
      const left = center - w / 2;
      const out = `<div class="c ${cls}" style="margin-left:${left - x}px;width:${w}px">${html}</div>`;
      x = left + w;
      return out;
    };
    const apps = TASK.map(([c, ic, run]) => cell(c, 31, ic, `${run ? "run" : ""} ${c === 557 ? "on" : ""}`)).join("");
    const earn = cell(790, 13, `<svg width="13" height="17" viewBox="0 0 13 17"><rect x="2" width="7" height="5" fill="#6ec1f0"/><rect y="4" width="13" height="13" rx="1" fill="#2f9be8"/><path d="M2 11H11M2 14H11" stroke="#d8efff"/></svg>`);
    const earnText = `<div class="c" style="margin-left:7px;width:auto">Earn...</div>`;
    x = 826;
    const tray = TRAY.map(([c, ic]) => cell(c, 12, ic)).join("");
    return `
      <div class="start"><svg width="12" height="12" viewBox="0 0 12 12" fill="#111"><path d="M0 1.700 5 1V5.700H0ZM5.700.9 12 0V5.700H5.700ZM0 6.300H5V11L0 10.300ZM5.700 6.300H12V12L5.700 11.100Z"/></svg></div>
      <div class="search">
        ${svg(13, 13, '<circle cx="8" cy="5" r="3.700"/><path d="M5.300 7.700 1.500 11.500"/>', 1)}
        <span>Пошук</span>
        <svg class="church" width="22" height="24" viewBox="0 0 22 24" fill="none" stroke="#8f8aa6"><path d="M11 2 19 9H3ZM5 9V20M17 9V20M9 20V12H13V20M1 21H21" /><path d="M0 24H22" stroke="#c9b9cf" stroke-width="2"/></svg>
      </div>
      ${apps}${earn}${earnText}${tray}
      <div class="stack" style="margin-left:2px;width:26px">POL<br>INTL</div>
      <div class="stack" style="margin-left:0;width:42px">15:01<br>22.02.2023</div>
      <div class="c" style="margin-left:7px;width:12px"><svg width="12" height="12" viewBox="0 0 12 12"><path d="M1 1H11V9H7L5 11V9H1Z" fill="#333"/></svg></div>`;
  }
}

customElements.define("zoom-titlebar", ZoomTitlebar);
customElements.define("film-strip", FilmStrip);
customElements.define("film-tile", FilmTile);
customElements.define("recording-bar", RecordingBar);
customElements.define("zoom-toolbar", ZoomToolbar);
customElements.define("shared-screen", SharedScreen);
customElements.define("browser-tabs", BrowserTabs);
customElements.define("browser-url", BrowserUrl);
customElements.define("plan-banner", PlanBanner);
customElements.define("mural-app", MuralApp);
customElements.define("mural-canvas", MuralCanvas);
customElements.define("diagram-node", DiagramNode);
customElements.define("win-taskbar", WinTaskbar);
</script>
</body>
</html>
